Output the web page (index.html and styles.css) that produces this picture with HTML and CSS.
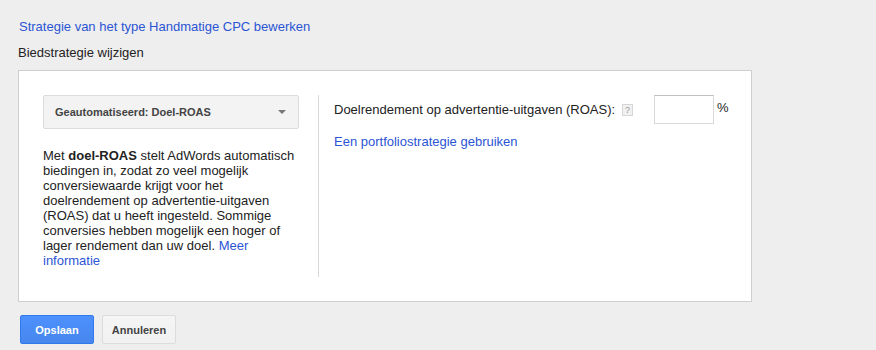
FILE: index.html
```html
<!DOCTYPE html>
<html lang="nl">
<head>
  <meta charset="UTF-8" />
  <title>Biedstrategie wijzigen</title>
  <link rel="stylesheet" href="styles.css">
</head>
<body>

  <a class="edit-link" href="#">Strategie van het type Handmatige CPC bewerken</a>
  <h2>Biedstrategie wijzigen</h2>

  <div class="panel">
    <div class="left-col">
      <div class="select">
        <span>Geautomatiseerd: Doel-ROAS</span>
        <span class="arrow"></span>
      </div>
      <p class="desc">Met <b>doel-ROAS</b> stelt AdWords automatisch biedingen in, zodat zo veel mogelijk conversiewaarde krijgt voor het doelrendement op advertentie-uitgaven (ROAS) dat u heeft ingesteld. Sommige conversies hebben mogelijk een hoger of lager rendement dan uw doel. <a href="#">Meer informatie</a></p>
    </div>

    <div class="right-col">
      <div class="roas-row">
        <label>Doelrendement op advertentie-uitgaven (ROAS):</label>
        <span class="help">?</span>
        <input type="text" class="roas-input">
        <span class="pct">%</span>
      </div>
      <a class="portfolio" href="#">Een portfoliostrategie gebruiken</a>
    </div>
  </div>

  <div class="actions">
    <button class="btn btn-primary">Opslaan</button>
    <button class="btn">Annuleren</button>
  </div>

</body>
</html>
```

FILE: styles.css
```css
* {
  box-sizing: border-box;
  margin: 0;
  padding: 0;
}

body {
  font-family: "Liberation Sans", Arial, sans-serif;
  font-size: 13px;
  line-height: 15px;
  color: #222;
  background: #eeeeee;
  padding: 19px 18px 0;
}

a {
  color: #2b55d4;
  text-decoration: none;
}

.edit-link {
  display: block;
  margin-left: 1px;
}

h2 {
  font-size: 13px;
  font-weight: normal;
  margin-top: 11px;
}

/* Paneel */
.panel {
  margin-top: 10px;
  width: 734px;
  background: #fff;
  border: 1px solid #cfcfcf;
  padding: 24px;
  display: flex;
}

.left-col {
  flex: 0 0 276px;
  padding-right: 19px;
  border-right: 1px solid #d9d9d9;
  padding-bottom: 9px;
}

.select {
  height: 34px;
  border: 1px solid #dcdcdc;
  border-radius: 2px;
  background: #f3f3f3;
  display: flex;
  align-items: center;
  justify-content: space-between;
  padding: 0 12px 0 11px;
  font-size: 11px;
  font-weight: bold;
  color: #444;
}

.arrow {
  width: 0;
  height: 0;
  border-left: 4px solid transparent;
  border-right: 4px solid transparent;
  border-top: 4px solid #777;
}

.desc {
  margin-top: 19px;
  color: #222;
}

.right-col {
  flex: 1;
  padding-left: 15px;
}

.roas-row {
  display: flex;
  align-items: center;
  height: 29px;
}

.roas-row label {
  white-space: nowrap;
}

.help {
  flex: 0 0 11px;
  height: 12px;
  margin-left: 7px;
  border: 1px solid #d6d6d6;
  background: #f1f1f1;
  color: #999;
  font-size: 9px;
  line-height: 10px;
  text-align: center;
}

.roas-input {
  width: 60px;
  min-width: 0;
  flex: none;
  height: 29px;
  margin-left: 21px;
  border: 1px solid #d9d9d9;
  border-top-color: #c0c0c0;
  font-family: inherit;
  font-size: 13px;
}

.pct {
  margin-left: 3px;
  margin-top: -4px;
}

.portfolio {
  display: block;
  margin-top: 10px;
}

/* Knoppen */
.actions {
  display: flex;
  gap: 8px;
  margin-top: 13px;
  padding-left: 2px;
}

.btn {
  width: 74px;
  height: 29px;
  font-family: inherit;
  font-size: 11px;
  font-weight: bold;
  color: #444;
  background: linear-gradient(#f5f5f5, #f1f1f1);
  border: 1px solid #dcdcdc;
  border-radius: 2px;
}

.btn-primary {
  color: #fff;
  background: linear-gradient(#4d90fe, #4787ed);
  border-color: #3079ed;
}
```
